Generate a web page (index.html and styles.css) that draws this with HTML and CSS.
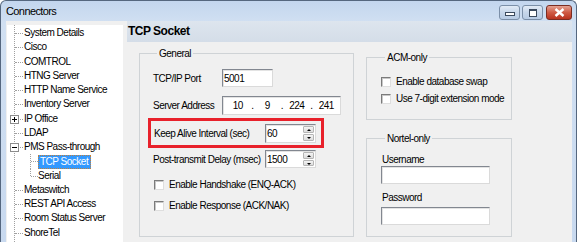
FILE: index.html
```html
<!DOCTYPE html>
<html lang="en">
<head>
    <meta charset="UTF-8">
    <title>Connectors</title>
    <link rel="stylesheet" href="styles.css">
</head>
<body>

<div class="window">
    <div class="titlebar">
        <span class="title">Connectors</span>
        <div class="caption-buttons">
            <span class="cap-btn cap-min"><i></i></span>
            <span class="cap-btn cap-max"><i></i></span>
            <span class="cap-btn cap-close">
                <svg width="11" height="9" viewBox="0 0 11 9"><path d="M1.5 1 L9.5 8 M9.5 1 L1.5 8" stroke="#fff" stroke-width="2.4"/></svg>
            </span>
        </div>
    </div>

    <div class="client">
        <!-- connector tree -->
        <div class="tree">
            <div class="node">System Details</div>
            <div class="node">Cisco</div>
            <div class="node">COMTROL</div>
            <div class="node">HTNG Server</div>
            <div class="node">HTTP Name Service</div>
            <div class="node">Inventory Server</div>
            <div class="node"><span class="exp closed"></span>IP Office</div>
            <div class="node">LDAP</div>
            <div class="node"><span class="exp"></span>PMS Pass-through</div>
            <div class="node child"><span class="selected">TCP Socket</span></div>
            <div class="node child last">Serial</div>
            <div class="node">Metaswitch</div>
            <div class="node">REST API Access</div>
            <div class="node">Room Status Server</div>
            <div class="node">ShoreTel</div>
        </div>

        <div class="panel">
            <div class="panel-head">TCP Socket</div>
            <div class="panel-body">
                <fieldset class="group group-general">
                    <legend>General</legend>
                    <div class="row row-tcp">
                        <label class="lbl lbl-short">TCP/IP Port</label>
                        <span class="field field-port">5001</span>
                    </div>
                    <div class="row row-addr">
                        <label class="lbl lbl-short">Server Address</label>
                        <span class="field field-ip">
                            <span class="oct">10</span><span class="dot">.</span>
                            <span class="oct">9</span><span class="dot">.</span>
                            <span class="oct">224</span><span class="dot">.</span>
                            <span class="oct">241</span>
                        </span>
                    </div>
                    <div class="row row-keep highlight">
                        <label class="lbl lbl-long">Keep Alive Interval (sec)</label>
                        <span class="field field-spin">60<span class="spin"><b class="up"></b><b class="down"></b></span></span>
                    </div>
                    <div class="row row-post">
                        <label class="lbl lbl-long2">Post-transmit Delay (msec)</label>
                        <span class="field field-spin">1500<span class="spin"><b class="up"></b><b class="down"></b></span></span>
                    </div>
                    <div class="check"><span class="box"></span>Enable Handshake (ENQ-ACK)</div>
                    <div class="check"><span class="box"></span>Enable Response (ACK/NAK)</div>
                </fieldset>

                <div class="side">
                    <fieldset class="group group-acm">
                        <legend>ACM-only</legend>
                        <div class="check"><span class="box"></span>Enable database swap</div>
                        <div class="check"><span class="box"></span>Use 7-digit extension mode</div>
                    </fieldset>
                    <fieldset class="group group-nortel">
                        <legend>Nortel-only</legend>
                        <div class="stack-lbl">Username</div>
                        <span class="field field-text"></span>
                        <div class="stack-lbl stack-lbl-gap">Password</div>
                        <span class="field field-text"></span>
                    </fieldset>
                </div>
            </div>
        </div>
    </div>
</div>

</body>
</html>
```

FILE: styles.css
```css
body {
    margin: 0;
    width: 577px;
    height: 242px;
    overflow: hidden;
    font-family: "Liberation Sans", Arial, sans-serif;
    font-size: 10px;
    letter-spacing: -0.5px;
    color: #000;
}
.window {
    display: flex;
    flex-direction: column;
    height: 242px;
    box-sizing: border-box;
    border: 1px solid #55677f;
    border-bottom: none;
    border-radius: 6px 6px 0 0;
    padding: 0 4px 0 5px;
    background: linear-gradient(#c3d6ee, #d1e0f2 22px, #c8d9ef);
}

/* title bar */
.titlebar {
    display: flex;
    height: 20px;
    align-items: center;
}
.title {
    font-size: 11px;
    letter-spacing: -0.6px;
    flex: 1;
}
.caption-buttons {
    display: flex;
    align-self: flex-start;
    margin-top: 4px;
}
.cap-btn {
    display: flex;
    align-items: center;
    justify-content: center;
    width: 19px;
    height: 13px;
    border: 1px solid #7b8fa8;
    border-radius: 3px;
    background: linear-gradient(#e2ebf6, #c6d6ea 50%, #b7cbe4);
    margin-left: 2px;
}
.cap-close {
    width: 24px;
    margin-left: 3px;
    border-color: #7a2c22;
    background: linear-gradient(#e4a293, #cf5b45 50%, #b9331f);
}
.cap-min i {
    width: 8px;
    height: 2px;
    margin-top: 3px;
    border: 1px solid #3b4a5e;
    background: #fff;
}
.cap-max i {
    width: 6px;
    height: 5px;
    border: 1px solid #3b4a5e;
    border-top-width: 2px;
    background: #fff;
}

/* client area */
.client {
    flex: 1;
    display: flex;
    background: #f0f0f0;
    min-height: 0;
}

/* tree */
.tree {
    position: relative;
    width: 116px;
    margin: 4px 0 0 1px;
    padding-top: 1px;
    background: #fff;
    overflow: hidden;
}
.tree::before {
    content: "";
    position: absolute;
    left: 7px;
    top: 0;
    bottom: 0;
    border-left: 1px dotted #a0a0a0;
}
.node {
    position: relative;
    height: 14.26px;
    line-height: 14.26px;
    padding-left: 17px;
    white-space: nowrap;
}
.node::before {
    content: "";
    position: absolute;
    left: 8px;
    top: 7px;
    width: 8px;
    border-top: 1px dotted #a0a0a0;
}
.node.child {
    padding-left: 31px;
}
.node.child::before {
    left: 24px;
    width: 7px;
}
.node.child::after {
    content: "";
    position: absolute;
    left: 23px;
    top: 0;
    bottom: 0;
    border-left: 1px dotted #a0a0a0;
}
.node.child.last::after {
    bottom: 7px;
}
.exp {
    position: absolute;
    left: 3px;
    top: 3px;
    width: 7px;
    height: 7px;
    border: 1px solid #8c8c8c;
    background: #fff;
    z-index: 1;
}
.exp::before {
    content: "";
    position: absolute;
    left: 1px;
    top: 3px;
    width: 5px;
    height: 1px;
    background: #000;
}
.exp.closed::after {
    content: "";
    position: absolute;
    left: 3px;
    top: 1px;
    width: 1px;
    height: 5px;
    background: #000;
}
.selected {
    display: inline-block;
    line-height: 12px;
    padding: 0 2px 0 1px;
    border: 1px dotted #c0803c;
    background: #3399ff;
    color: #fff;
    vertical-align: top;
    margin-top: 0.6px;
}

/* right panel */
.panel {
    flex: 1;
    margin-left: 4px;
    display: flex;
    flex-direction: column;
}
.panel-head {
    height: 21px;
    line-height: 21px;
    padding-left: 1px;
    font-size: 12px;
    letter-spacing: -0.5px;
    font-weight: bold;
    background: linear-gradient(#dde5ee, #d4dde8);
}
.panel-body {
    display: flex;
    gap: 12px;
    padding: 5px 0 0 12px;
}
.group {
    margin: 0;
    border: 1px solid #cfd3d6;
    box-sizing: border-box;
}
.group legend {
    padding: 0 2px;
    margin-left: 4px;
    line-height: 13px;
}
.group-general {
    width: 215px;
    height: 190px;
    padding: 9px 0 0 13px;
}
.side {
    display: flex;
    flex-direction: column;
    gap: 12px;
    margin-top: 4px;
}
.group-acm {
    width: 146px;
    height: 69px;
    padding: 9px 0 0 14px;
}
.group-nortel {
    width: 146px;
    height: 105px;
    padding: 9px 0 0 14px;
}

/* form rows */
.row {
    display: flex;
    align-items: center;
}
.lbl-short {
    width: 69px;
}
.lbl-long {
    width: 111px;
}
.lbl-long2 {
    width: 112px;
}
.row-tcp {
    margin-bottom: 9px;
}
.row-addr {
    margin-bottom: 3px;
}
.highlight {
    width: fit-content;
    margin-left: -5px;
    margin-bottom: 2px;
    padding: 3px 5px 2px 3px;
    border: 3px solid #e8212b;
}
.row-post {
    margin-bottom: 6px;
}

.field {
    position: relative;
    display: inline-flex;
    align-items: center;
    box-sizing: border-box;
    height: 19px;
    padding-left: 1px;
    background: #fff;
    border: 1px solid;
    border-color: #828790 #dadada #dadada #828790;
    box-shadow: inset 1px 1px 0 #e3e3e3;
}
.field-port {
    width: 51px;
    height: 18px;
}
.field-ip {
    width: 119px;
    padding-left: 2px;
}
.oct {
    width: 25.5px;
    text-align: center;
}
.dot {
    width: 4px;
    text-align: center;
}
.field-spin {
    width: 51px;
}
.row-post .field-spin {
    height: 18px;
}
.spin {
    position: absolute;
    right: 1px;
    top: 1px;
    bottom: 1px;
    width: 11px;
    display: flex;
    flex-direction: column;
    gap: 1px;
}
.spin b {
    flex: 1;
    position: relative;
    background: linear-gradient(#f4f4f4, #dcdcdc);
    border: 1px solid #b5b5b5;
    border-radius: 1px;
}
.spin b::after {
    content: "";
    position: absolute;
    left: 3px;
    top: 2px;
    border-left: 2px solid transparent;
    border-right: 2px solid transparent;
}
.spin .up::after {
    border-bottom: 2px solid #000;
}
.spin .down::after {
    border-top: 2px solid #000;
}
.field-text {
    display: block;
    width: 109px;
    height: 18px;
}

.check {
    display: flex;
    align-items: center;
    height: 21px;
    padding-left: 1px;
}
.group-acm .check {
    height: 17px;
    padding-left: 0;
}
.box {
    width: 8px;
    height: 8px;
    margin-right: 5px;
    border: 1px solid;
    border-color: #7b7b7b #dedede #dedede #7b7b7b;
    background: #fff;
    box-shadow: inset 1px 1px 0 #c8c8c8;
}

.stack-lbl {
    line-height: 12px;
    padding-left: 1px;
}
.stack-lbl-gap {
    margin-top: 8px;
    margin-bottom: 3px;
}
```
